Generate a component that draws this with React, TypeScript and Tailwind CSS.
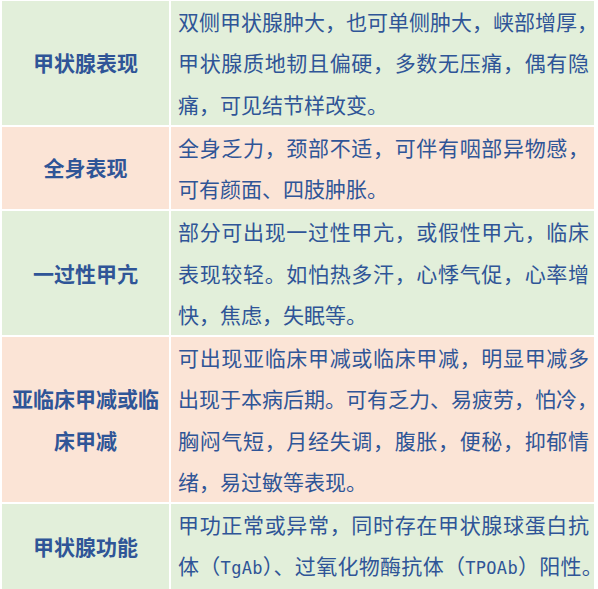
import React from "react";

const Latin = ({ children }: { children: React.ReactNode }) => (
  <span
    className="text-[17px]"
    style={{ fontFamily: '"DejaVu Sans Mono", monospace' }}
  >
    {children}
  </span>
);

const rows: { title: string; lines: React.ReactNode[]; bg: string }[] = [
  {
    title: "甲状腺表现",
    lines: [
      "双侧甲状腺肿大，也可单侧肿大，峡部增厚，",
      "甲状腺质地韧且偏硬，多数无压痛，偶有隐",
      "痛，可见结节样改变。",
    ],
    bg: "bg-[#e2efda]",
  },
  {
    title: "全身表现",
    lines: ["全身乏力，颈部不适，可伴有咽部异物感，", "可有颜面、四肢肿胀。"],
    bg: "bg-[#fbe4d6]",
  },
  {
    title: "一过性甲亢",
    lines: [
      "部分可出现一过性甲亢，或假性甲亢，临床",
      "表现较轻。如怕热多汗，心悸气促，心率增",
      "快，焦虑，失眠等。",
    ],
    bg: "bg-[#e2efda]",
  },
  {
    title: "亚临床甲减或临床甲减",
    lines: [
      "可出现亚临床甲减或临床甲减，明显甲减多",
      "出现于本病后期。可有乏力、易疲劳，怕冷，",
      "胸闷气短，月经失调，腹胀，便秘，抑郁情",
      "绪，易过敏等表现。",
    ],
    bg: "bg-[#fbe4d6]",
  },
  {
    title: "甲状腺功能",
    lines: [
      "甲功正常或异常，同时存在甲状腺球蛋白抗",
      <span className="tracking-[0.3px]">
        体（<Latin>TgAb</Latin>）、过氧化物酶抗体（<Latin>TPOAb</Latin>）阳性。
      </span>,
    ],
    bg: "bg-[#e2efda]",
  },
];

const App = () => {
  return (
    <div
      className="w-[598px] h-[589px] overflow-hidden bg-white pl-[2px] pt-[1px] pr-[4px] text-[#2f5597]"
      style={{ fontFamily: '"Noto Sans CJK SC", "Noto Sans", sans-serif' }}
    >
      <div className="grid grid-cols-[167px_minmax(0,1fr)] gap-[2px]">
        {rows.map((row, i) => (
          <React.Fragment key={i}>
            {/* left label */}
            <div
              className={`${row.bg} flex items-center justify-center px-[6px] text-center text-[21px] leading-[41.25px] font-bold`}
            >
              {row.title}
            </div>
            {/* right description, one line per block */}
            <div
              className={`${row.bg} pl-[7px] pr-[5px] text-[21px] leading-[41.25px]`}
            >
              {row.lines.map((line, j) => (
                <div
                  key={j}
                  className={
                    j < row.lines.length - 1
                      ? "whitespace-nowrap text-justify [text-align-last:justify]"
                      : "whitespace-nowrap"
                  }
                >
                  {line}
                </div>
              ))}
            </div>
          </React.Fragment>
        ))}
      </div>
    </div>
  );
};

export default App;
